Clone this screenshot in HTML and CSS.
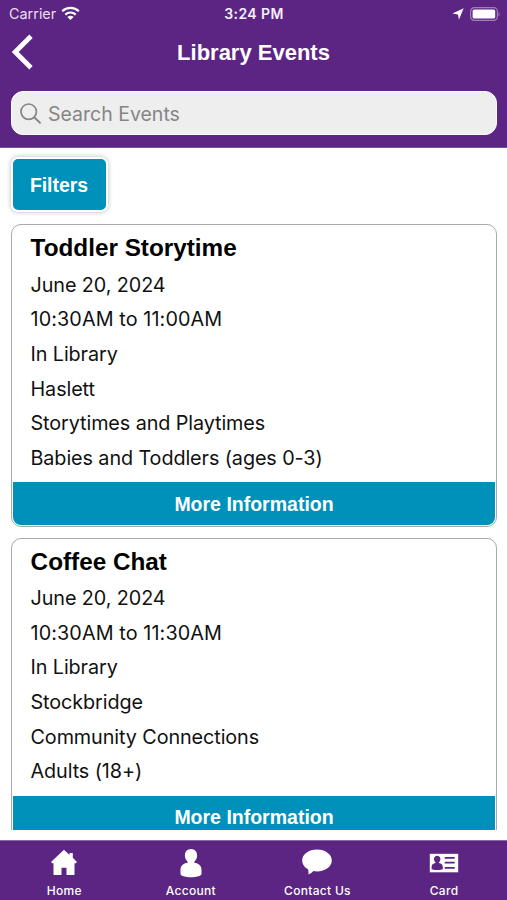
FILE: index.html
```html
<!DOCTYPE html>
<html lang="en">
<head>
<meta charset="utf-8">
<title>Library Events</title>
<link rel="stylesheet" href="styles.css">
</head>
<body>
<div class="app">
  <header class="header">
    <div class="status">
      <div class="carrier"><span>Carrier</span>
        <svg class="wifi" width="19" height="15" viewBox="0 0 19 15" fill="none" stroke="#fff" stroke-width="2.2"><path d="M1.2 5.3C5.8.8 13.2.8 17.8 5.3M4.3 8.6c3-2.8 7.4-2.8 10.4 0"/><path d="M6.4 10.9c1.8-1.6 4.4-1.6 6.2 0L9.5 14z" fill="#fff" stroke="none"/></svg>
      </div>
      <div class="clock">3:24 PM</div>
      <div class="indicators">
        <svg width="12" height="12" viewBox="0 0 12 12" fill="#fff"><path d="M11.7.3 6.9 11.8 6 6.400.4 5.600z"/></svg>
        <svg width="30" height="14" viewBox="0 0 30 14"><rect x=".6" y=".6" width="26.8" height="12.8" rx="3.8" fill="none" stroke="#a17fb8" stroke-width="1.2"/><rect x="2.6" y="2.4" width="22.600" height="9.200" rx="1.600" fill="#fff"/><path d="M28.6 4.9c1.4.6 1.4 3.6 0 4.2z" fill="#a17fb8"/></svg>
      </div>
    </div>
    <div class="titlebar">
      <svg class="back" width="22" height="36" viewBox="0 0 22 36" fill="none" stroke="#fff" stroke-width="4.8"><path d="M19 2.2 3.2 18 19 33.8"/></svg>
      <h1>Library Events</h1>
    </div>
    <div class="search">
      <svg width="22" height="22" viewBox="0 0 22 22" fill="none" stroke="#858585" stroke-width="1.7"><circle cx="8.7" cy="8.7" r="7.7"/><path d="m14.2 14.2 6.4 6.2" stroke-width="2"/></svg>
      <span>Search Events</span>
    </div>
  </header>
  <main class="content">
    <button class="filters">Filters</button>
    <article class="card">
      <h2>Toddler Storytime</h2>
      <p>June 20, 2024</p>
      <p class="time">10:30AM to 11:00AM</p>
      <p>In Library</p>
      <p>Haslett</p>
      <p>Storytimes and Playtimes</p>
      <p>Babies and Toddlers (ages 0-3)</p>
      <button class="more">More Information</button>
    </article>
    <article class="card">
      <h2>Coffee Chat</h2>
      <p>June 20, 2024</p>
      <p class="time">10:30AM to 11:30AM</p>
      <p>In Library</p>
      <p>Stockbridge</p>
      <p>Community Connections</p>
      <p>Adults (18+)</p>
      <button class="more">More Information</button>
    </article>
  </main>
  <nav class="tabs">
    <a class="tab"><svg width="30" height="30" viewBox="0 0 30 30" fill="#fff"><path d="M15 1.7 2 14l1.2 1.2h1.3V27h8v-7.2h5V27h8V15.200h1.300L28 14l-4.200-4.200V5h-3.300v1.900z"/></svg><span>Home</span></a>
    <a class="tab"><svg width="30" height="30" viewBox="0 0 30 30" fill="#fff"><path d="M15 1c-3.700 0-6.100 2.800-6.100 6.200 0 3.200 1.300 5 2.800 6.500v1.100c-4.500.5-7.200 3-7.200 7.200v4c0 2 5.500 3.200 10.500 3.200s10.500-1.200 10.500-3.200v-4c0-4.200-2.700-6.700-7.200-7.200v-1.100c1.500-1.500 2.800-3.300 2.800-6.500C21.100 3.800 18.700 1 15 1z"/></svg><span>Account</span></a>
    <a class="tab"><svg width="30" height="30" viewBox="0 0 30 30" fill="#fff"><path d="M15 1.600C6.800 1.600.2 6.300.2 12.500c0 3.700 2.400 6.900 6 8.900.2 2 .6 3.500.2 5.100 2.200-.7 3.800-2 5.100-3.500 1.100.2 2.300.4 3.500.4 8.200 0 14.800-4.700 14.800-10.900S23.200 1.600 15 1.600z"/></svg><span>Contact Us</span></a>
    <a class="tab"><svg width="30" height="30" viewBox="0 0 30 30"><path fill="#fff" d="M.8 5.800h28.400v18.500H.8z"/><path fill="#5d2583" d="M8.200 7.700c-2 0-3.200 1.400-3.200 3.300 0 1.500.6 2.600 1.500 3.300v.7c-2.500.5-3.900 1.700-3.900 4v2.200c1.500 1 9.700 1 11.200 0V19c0-2.300-1.400-3.500-3.900-4v-.7c.9-.7 1.500-1.800 1.500-3.300 0-1.900-1.200-3.300-3.200-3.300zM15.700 8.900h10v1.800h-10zM15.700 13.800h10v1.800h-10zM15.700 18.900h10v1.800h-10z"/></svg><span>Card</span></a>
  </nav>
</div>
</body>
</html>
```
FILE: styles.css
```css
* { box-sizing: border-box; }
body { margin: 0; background: #fff; color: #111; font-family: Inter, "Liberation Sans", sans-serif; }
h1, h2, p { margin: 0; }
svg { display: block; flex: none; }
.app { width: 507px; height: 900px; display: flex; flex-direction: column; overflow: hidden; }
.header { flex: none; height: 148px; background: #5d2583; color: #fff; border-bottom: 1px solid #7c4f9b; }
.status { height: 27px; display: grid; grid-template-columns: 1fr auto 1fr; align-items: center; padding: 0 7px 0 9px; font-size: 14.4px; }
.carrier { display: flex; align-items: center; gap: 5px; color: #eadff0; letter-spacing: 0; }
.clock { font-weight: 600; font-size: 14px; letter-spacing: .4px; color: #f5eff8; margin-left: -1px; }
.indicators { display: flex; align-items: center; justify-content: flex-end; gap: 6px; }
.titlebar { height: 50px; display: grid; grid-template-columns: 80px 1fr 80px; align-items: center; }
.back { margin-left: 12px; }
h1 { font: bold 22px/26px "Liberation Sans", sans-serif; text-align: center; padding-top: 2px; }
.search { margin: 14px 10px 0 11px; height: 44px; border-radius: 12px; background: #eee; border: 1px solid #fff; display: flex; align-items: center; gap: 6px; padding: 2px 0 0 8px; color: #858585; font-size: 19.5px; }
.content { flex: 1; min-height: 0; margin-bottom: 10px; overflow: hidden; padding: 9px 10px 0 11px; display: flex; flex-direction: column; align-items: stretch; }
button { border: 0; color: #fff; background: #0091ba; font: bold 19.5px/24px "Liberation Sans", sans-serif; flex: none; }
.filters { width: 97px; height: 55px; border: 2px solid #fff; border-radius: 7px; box-shadow: 0 0 5px rgba(0,0,0,.28); align-self: flex-start; padding: 0 1px 0 0; font-size: 19.4px; }
.card { flex: none; height: 303px; border: 1px solid #aaa; border-radius: 10px; padding: 0 1px 1px; margin-top: 12px; display: flex; flex-direction: column; }
.card + .card { margin-top: 10.5px; }
h2 { font: bold 24.3px/28px "Liberation Sans", sans-serif; color: #000; padding: 9px 0 5px 17.6px; height: 42.6px; }
p { padding-left: 17.5px; height: 34.65px; font-size: 19.8px; line-height: 34.65px; letter-spacing: -.09px; white-space: nowrap; }
.time { letter-spacing: .1px; }
.more { margin-top: auto; height: 43px; border-radius: 0 0 8px 8px; }
.tabs { flex: none; height: 60px; background: #5d2583; border-top: 1px solid #8d68a8; display: grid; grid-template-columns: repeat(4, 126.6px); padding-left: 1px; color: #fff; }
.tab { display: flex; flex-direction: column; align-items: center; padding-top: 7px; font-size: 12px; line-height: 14px; font-weight: 500; letter-spacing: .3px; }
.tab span { margin-top: 6px; }
```
